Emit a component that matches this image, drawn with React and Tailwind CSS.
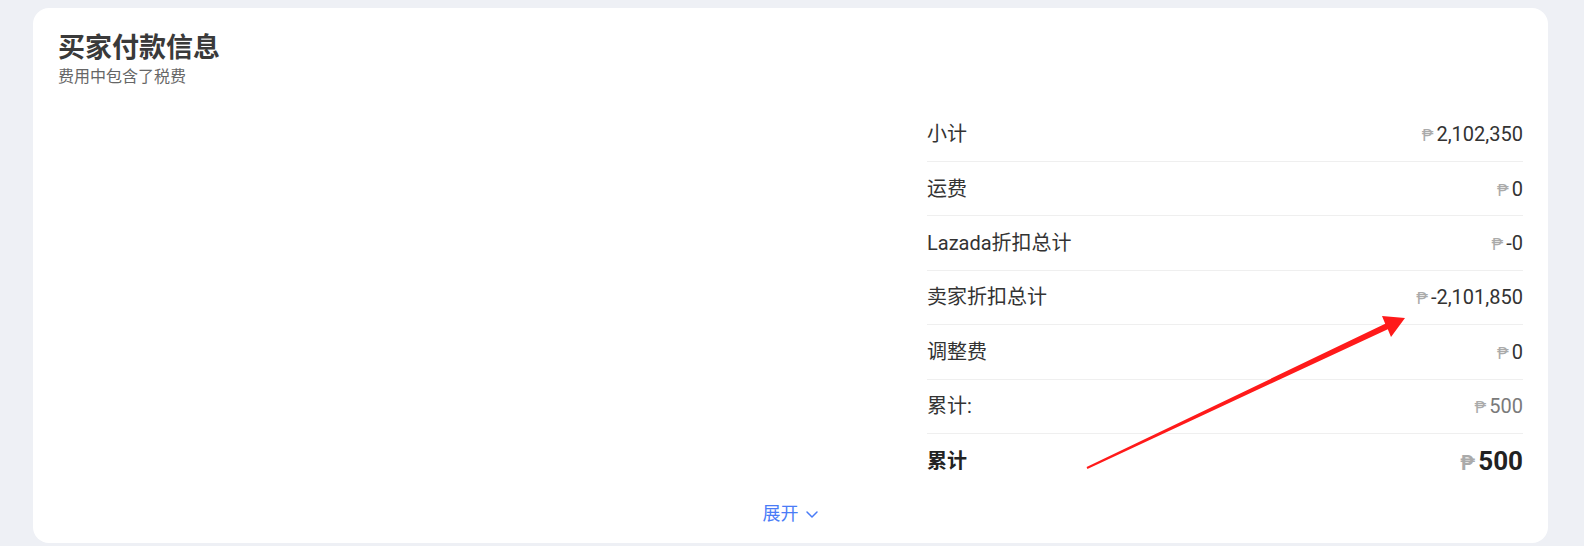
import React from "react";

const rows = [
  { label: "小计", value: "2,102,350" },
  { label: "运费", value: "0" },
  { label: "Lazada折扣总计", value: "-0" },
  { label: "卖家折扣总计", value: "-2,101,850" },
  { label: "调整费", value: "0" },
  { label: "累计:", value: "500", muted: true },
];

function Peso({ big }) {
  return (
    <span
      className={`text-[#aaa] mr-[3px] ${big ? "text-[20px]" : "text-[16px]"}`}
    >
      ₱
    </span>
  );
}

export default function App() {
  return (
    <div
      className="relative w-[1584px] h-[546px] bg-[#eef0f5] pt-[8px] pl-[33px] overflow-hidden"
      style={{ fontFamily: '"Roboto", "Noto Sans CJK SC", sans-serif' }}
    >
      <div className="w-[1515px] h-[535px] bg-white rounded-[16px] px-[25px] pt-[25px] flex flex-col">
        {/* Header */}
        <div>
          <h2 className="text-[27px] leading-[30px] font-bold text-[#3a3a3a]">买家付款信息</h2>
          <p className="text-[16px] leading-[20px] text-[#666] mt-[4px]">费用中包含了税费</p>
        </div>

        {/* Summary table */}
        <div className="flex justify-end mt-[20.6px]">
          <div className="w-[596px]">
            {rows.map((r) => (
              <div
                key={r.label}
                className="h-[54.4px] flex items-center justify-between border-b border-[#efefef] text-[20px] text-[#333]"
              >
                <span>{r.label}</span>
                <span className={`flex items-baseline ${r.muted ? "text-[#7a7a7a]" : "text-[#333]"}`}>
                  <Peso />
                  {r.value}
                </span>
              </div>
            ))}
            <div className="h-[54.4px] flex items-center justify-between text-[#222]">
              <span className="text-[20px] font-bold">累计</span>
              <span className="flex items-baseline text-[26px] font-bold">
                <Peso big />
                500
              </span>
            </div>
          </div>
        </div>

        {/* Expand */}
        <div className="flex justify-center mt-[14px]">
          <button className="flex items-center gap-[6px] text-[18px] leading-[24px] text-[#4a7cf7]">
            展开
            <svg width="14" height="14" viewBox="0 0 14 14" fill="none">
              <path d="M2 5l5 5 5-5" stroke="currentColor" strokeWidth="1.5" strokeLinecap="round" strokeLinejoin="round" />
            </svg>
          </button>
        </div>
      </div>

      {/* Annotation arrow */}
      <svg className="absolute left-0 top-0 pointer-events-none" width="1584" height="546">
        <polygon
          fill="#ff1a1a"
          points="1087.4,468.9 1387.8,329.2 1391,337 1405,318 1382,316 1385.2,323.8 1086.6,467.1"
        />
      </svg>
    </div>
  );
}
